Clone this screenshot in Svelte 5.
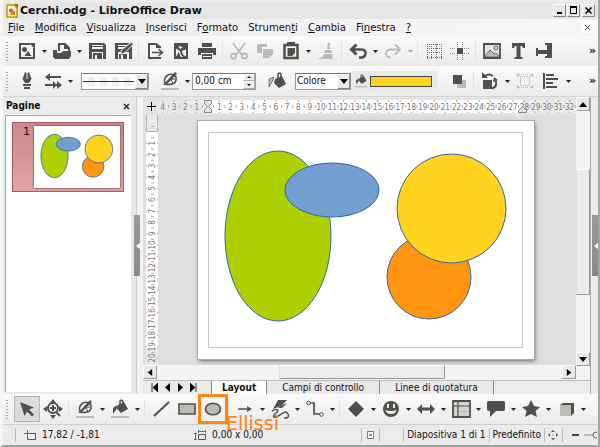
<script>
  const D = '#4d514a';
  const G = '#babdb6';

  // icon bodies, drawn on a 20x20 grid
  const icons = {
    new: `<path d="M13 3H3v14h14V7" fill="none" stroke="${D}" stroke-width="2"/><path d="M12 2l6 6V2z" fill="${D}"/><circle cx="7.500" cy="8.500" r="2.500" fill="${D}"/><path d="M11 10l3.500 5h-7z" fill="${D}"/>`,
    open: `<path d="M7 10V3h6l4 4v4" fill="none" stroke="${D}" stroke-width="2"/><path d="M12 2l6 6h-6z" fill="${D}"/><path d="M1 9h4v3h4l2-2h8v5l-2 3H3l-2-2z" fill="${D}"/>`,
    save: `<path d="M2 2h15l2 2v14H2V4z" fill="${D}"/><path d="M5 4h11v1H5zM5 6h11v2H5z" fill="#f4f4f4"/><path d="M5 11h11v7H5z" fill="#f4f4f4"/><path d="M6 12h9v6H6z" fill="${D}"/><path d="M8 14h2v4H8z" fill="#f4f4f4"/>`,
    saveas: `<path d="M2 2h17v16H2z" fill="${D}"/><path d="M5 4h11v1H5zM5 6h11v2H5z" fill="#f4f4f4"/><path d="M5 11h11v7H5z" fill="#f4f4f4"/><path d="M6 13h8v5H6z" fill="${D}"/><path d="M8 14h2v4H8z" fill="#f4f4f4"/><path d="M18.500 1l2 2-9 9-4 1 1-4z" fill="${D}" stroke="#f4f4f4"/>`,
    export: `<path d="M15 7V6l-4-3H4v14h11v-1" fill="none" stroke="${D}" stroke-width="2"/><path d="M11 2v5h5z" fill="${D}"/><path d="M7 11.500h10" stroke="${D}" stroke-width="1.500"/><path d="M13.500 8l4 3.500-4 3.500" fill="none" stroke="${D}" stroke-width="1.500"/>`,
    pdf: `<path d="M4 3h12v14H4z" fill="#f4f4f4" stroke="${D}" stroke-width="2"/><path d="M4 3h12v5l-5 2c0 3 2 5 5 6l-2 1c-3-1-5-4-5-7L4 7z" fill="${D}"/><path d="M7 5l5 1-3 2z" fill="#f4f4f4"/><path d="M4 17l4-6 2 6z" fill="${D}"/>`,
    print: `<path d="M5 2h10v4H5zM1 7h18v7h-3v-2H4v2H1z" fill="${D}"/><path d="M5 13h10v5H5z" fill="${D}"/><path d="M6 15.500h8" stroke="#f4f4f4"/>`,
    cut: `<path d="M4 2l9 12M16 2L7 14" stroke="${G}" stroke-width="2"/><circle cx="4.500" cy="15" r="2.500" fill="none" stroke="${G}" stroke-width="2"/><circle cx="15.500" cy="15" r="2.500" fill="none" stroke="${G}" stroke-width="2"/>`,
    copy: `<path d="M2 3h10v3H7v6H2z" fill="${G}"/><path d="M8 8h10v5l-4 4H8z" fill="${G}"/>`,
    paste: `<path d="M3.500 4h13v13h-13z" fill="none" stroke="${D}" stroke-width="2.500"/><path d="M6 1h8v4H6zM6.500 7h7.500v5l-3 3H6.500z" fill="${D}"/>`,
    brush: `<path d="M12 2h2v6h-3z" fill="${G}"/><path d="M9 9h6l1 3H8z" fill="${G}"/><path d="M8 13h8l1 5H2c3-1 5-3 6-5z" fill="${G}"/>`,
    undo: `<path d="M8.500 3.500L3.500 8.500l5 5" fill="none" stroke="${D}" stroke-width="3"/><path d="M5 8.500h8q5 0 4.500 4-.5 4-4.500 4h-2" fill="none" stroke="${D}" stroke-width="2.500"/>`,
    redo: `<path d="M12 3.500l5 5-5 5" fill="none" stroke="${G}" stroke-width="2"/><path d="M16 8.500H8q-5 0-5 4t5 4" fill="none" stroke="${G}" stroke-width="2"/>`,
    grid: `<g stroke="#666" stroke-dasharray="1 1"><path d="M3 3.500h15M3 7.500h15M3 11.500h15M3 16.500h15"/><path d="M3.500 3v15M7.500 3v15M12.500 3v15M17.500 3v15"/></g>`,
    guides: `<path d="M7 7h6v6H7z" fill="${D}"/><path d="M7.500 1v5M12.500 1v5M7.500 14v6M12.500 14v6M0 7.500h6M0 12.500h6M14 7.500h6M14 12.500h6" stroke="#888" stroke-dasharray="1 1"/>`,
    image: `<path d="M2 3h16v14H2z" fill="#e4e5e2" stroke="${D}" stroke-width="1.800"/><circle cx="14" cy="7" r="1.800" fill="#f4f4f4" stroke="${D}"/><path d="M3 15l5-6 4 4 2-1 4 4H3z" fill="${G}" stroke="${D}" stroke-width=".8"/>`,
    text: `<path d="M4 2h13v5h-2l-1-2h-1.500v11h2v2h-8v-2h2V5H7L6 7H4z" fill="${D}"/>`,
    fontwork: `<path d="M2 7h2v2h9V4h-2V2h7v15h-7v-2h2v-2H4v2H2z" fill="${D}"/>`,
    pen: `<path d="M8 1l-1 3-1.500 4L8 12h4l2.500-4L13 4l-1-3-1.500 1v6h-1V2z" fill="${D}"/><path d="M6 13h8v2H6zM7 16h6v2H7z" fill="${D}"/>`,
    arrows: `<path d="M5 6h13M2 14h13" stroke="${D}" stroke-width="2"/><path d="M7 2v8L2 6zM10 10v8l4-4zM14 10v8l5-4z" fill="${D}"/>`,
    linecolor: `<path d="M5 13q-2-6 3-9 5-2 8 2 1 6-4 7-4 1-7 0z" fill="none" stroke="${D}" stroke-width="1.500"/><path d="M3 14L15 1l2 2L7 13z" fill="${D}"/><path d="M10 8l5 0M11 8l2 5" stroke="${D}"/><path d="M1 17h18v2H1z" fill="${G}"/>`,
    fillcolor: `<path d="M8 6l6-3 4 7-7 4-5-5z" fill="${D}"/><path d="M10 9V2q2-2 3 1v3" fill="none" stroke="${D}" stroke-width="1.500"/><path d="M7 6L3 9v6l3-4z" fill="${D}"/><path d="M1 17h18v2H1z" fill="${G}"/>`,
    bucket: `<path d="M8 8l7-3 4 8-7 4-5-5z" fill="${D}"/><path d="M11 9V3q2-2 3 0v4" fill="none" stroke="${D}" stroke-width="1.500"/><path d="M7 6L2 8v8l3-5z" fill="${G}" stroke="${D}" stroke-width=".7"/>`,
    shadow: `<path d="M9 9h9v8H9z" fill="${G}"/><path d="M5 4h9v9H5z" fill="${D}"/>`,
    rotate: `<path d="M3 9h9v9H3z" fill="${D}"/><path d="M5 5q4-3 8 0M14 8q4 3 1 8l-3 1.500" fill="none" stroke="${D}" stroke-width="2"/><path d="M2 1v6h6z" fill="${D}"/><path d="M13 11l1-5 4 3z" fill="${D}"/>`,
    crop: `<path d="M5.500 5.500h9v9h-9z" fill="none" stroke="${G}" stroke-dasharray="2 1"/><path d="M2.500 6V3.500H5M15 3.500h2.500V6M2.500 14v2.500H5M15 16.500h2.500V14" fill="none" stroke="${G}" stroke-width="1.500"/><path d="M6 3.500h8M6 16.500h8" stroke="${G}" stroke-dasharray="1 1"/>`,
    align: `<path d="M3 2v16" stroke="${D}" stroke-width="2"/><path d="M5 3h8v2H5zM5 7h12v2H5zM5 11h7v2H5zM5 15h11v2H5z" fill="${D}"/>`,
    select: `<path d="M3 3l14 5.500-5 2 5 5-2 2-5-5-2.500 4.500z" fill="${D}"/>`,
    zoom: `<path d="M10 0l3 4H7zM10 20l3-4H7zM0 10l4-3v6zM20 10l-4-3v6z" fill="${D}"/><circle cx="10" cy="9" r="5" fill="#f4f4f4" stroke="${D}" stroke-width="2"/><path d="M10 6v6M7 9h6M13 13l4 4" stroke="${D}" stroke-width="2"/>`,
    line: `<path d="M3 17L18 3" stroke="${D}" stroke-width="2"/>`,
    rect: `<path d="M2 5h16v10H2z" fill="${G}" stroke="${D}" stroke-width="1.600"/>`,
    ellipse: `<ellipse cx="10" cy="10" rx="7.500" ry="5.800" fill="${G}" stroke="${D}" stroke-width="1.600"/>`,
    arrow: `<path d="M3 10h10" stroke="${D}" stroke-width="1.500"/><path d="M12 7l5 3-5 3z" fill="${D}"/>`,
    curve: `<path d="M8 1h9l-6 6-8 3z" fill="${D}"/><path d="M17 4l-5 5H8l4-3z" fill="${D}"/><path d="M2 12c5-3 8-1 4 2s-3 6 2 3 8-6 10-2-2 4-4 4" fill="none" stroke="${D}" stroke-width="1.500"/>`,
    connector: `<path d="M4 4h5v11h7" fill="none" stroke="${D}" stroke-width="1.700"/><circle cx="3.500" cy="4" r="1.800" fill="#f4f4f4" stroke="${D}"/><circle cx="16.500" cy="15.500" r="1.800" fill="#f4f4f4" stroke="${D}"/>`,
    diamond: `<path d="M10 2l8 8-8 8-8-8z" fill="${D}"/>`,
    smiley: `<circle cx="10" cy="10" r="8" fill="${D}"/><path d="M7 5v4M13 5v4" stroke="#e9e9e9" stroke-width="2"/><path d="M4.500 11q5.500 2 11 0-.5 4-5.500 4t-5.500-4z" fill="#e9e9e9"/>`,
    double: `<path d="M6 5v3.500h8V5l5 5-5 5v-3.500H6V15l-5-5z" fill="${D}"/>`,
    table: `<path d="M2 2h17v16H2z" fill="#d3d5d0" stroke="${D}" stroke-width="1.800"/><path d="M2 7h17M7 2v16" stroke="${D}" stroke-width="1.200"/><path d="M8 12.500h10M13 8v9" stroke="${G}"/>`,
    callout: `<path d="M3 2h14q2 0 2 2v6q0 2-2 2h-7l-6 6v-6H3q-2 0-2-2V4q0-2 2-2z" fill="${D}"/>`,
    star: `<path d="M10 1l3 6 6 1-4.500 4 1.500 6-6-3-6 3 1.500-6L1 8l6-1z" fill="${D}"/>`,
    cube: `<path d="M4 6l3-2h11v10l-3 3z" fill="${D}"/><path d="M4 6h11v11H4z" fill="${G}"/>`
  };

  // m: has a drop-down arrow, off: greyed out, '|' is a separator
  const standardBar = [
    { i: 'new', t: 'Nuovo', m: 1 }, { i: 'open', t: 'Apri', m: 1 }, { i: 'save', t: 'Salva' },
    { i: 'saveas', t: 'Salva con nome' }, '|', { i: 'export', t: 'Esporta' },
    { i: 'pdf', t: 'Esporta come PDF' }, { i: 'print', t: 'Stampa' }, '|',
    { i: 'cut', t: 'Taglia', off: 1 }, { i: 'copy', t: 'Copia', off: 1 }, { i: 'paste', t: 'Incolla', m: 1 },
    { i: 'brush', t: 'Clona formattazione', off: 1 }, '|', { i: 'undo', t: 'Annulla', m: 1 },
    { i: 'redo', t: 'Ripristina', m: 1, off: 1 }, '|', { i: 'grid', t: 'Griglia' },
    { i: 'guides', t: 'Linee guida' }, '|', { i: 'image', t: 'Immagine' }, { i: 'text', t: 'Casella di testo' },
    { i: 'fontwork', t: 'Fontwork' }
  ];
  const drawBar = [
    { i: 'select', t: 'Seleziona', on: 1 }, { i: 'zoom', t: 'Zoom' }, '|', { i: 'linecolor', t: 'Colore linea', m: 1 },
    { i: 'fillcolor', t: 'Colore riempimento', m: 1 }, '|', { i: 'line', t: 'Linea' }, { i: 'rect', t: 'Rettangolo' },
    { i: 'ellipse', t: 'Ellisse', mark: 1 }, '|', { i: 'arrow', t: 'Linee e frecce', m: 1 },
    { i: 'curve', t: 'Curva', m: 1 }, { i: 'connector', t: 'Connettore', m: 1 }, '|',
    { i: 'diamond', t: 'Forme base', m: 1 }, { i: 'smiley', t: 'Forme simbolo', m: 1 },
    { i: 'double', t: 'Frecce blocco', m: 1 }, { i: 'table', t: 'Diagramma di flusso', m: 1 },
    { i: 'callout', t: 'Legende', m: 1 }, { i: 'star', t: 'Stelle', m: 1 }, { i: 'cube', t: 'Oggetti 3D', m: 1 }
  ];
  const menus = [['', 'F', 'ile'], ['', 'M', 'odifica'], ['', 'V', 'isualizza'], ['', 'I', 'nserisci'],
    ['F', 'o', 'rmato'], ['Strumen', 't', 'i'], ['', 'C', 'ambia'], ['Fi', 'n', 'estra'], ['', '?', '']];

  // ruler pitch: one centimetre
  const cm = 11.3;
  const hTicks = Array.from({ length: 37 }, (_, i) => i - 4);
  const vTicks = Array.from({ length: 21 }, (_, i) => i);
</script>

{#snippet icon(name)}
  <svg class="icon" viewBox="0 0 20 20" aria-hidden="true">{@html icons[name]}</svg>
{/snippet}

{#snippet caret(label, off)}
  <button class="caret" class:off aria-label={label}>
    <svg viewBox="0 0 5 3" aria-hidden="true"><path d="M0 0h5L2.500 3z" fill="currentColor" /></svg>
  </button>
{/snippet}

{#snippet tools(list)}
  {#each list as b}
    {#if b === '|'}
      <span class="sep"></span>
    {:else}
      <button class="tool" class:on={b.on} class:mark={b.mark} disabled={!!b.off} aria-label={b.t}>
        {@render icon(b.i)}
        {#if b.mark}<span class="note">Ellissi</span>{/if}
      </button>
      {#if b.m}{@render caret(b.t + ': menu', b.off)}{/if}
    {/if}
  {/each}
{/snippet}

{#snippet shapes()}
  <g stroke="#3465a4">
    <ellipse cx="80" cy="115" rx="53" ry="85" fill="#aecf00" />
    <ellipse cx="134" cy="69" rx="47" ry="27" fill="#729fcf" />
    <circle cx="231" cy="156" r="42" fill="#ff950e" />
    <circle cx="253.500" cy="87.500" r="54.500" fill="#ffd320" />
  </g>
{/snippet}

<div class="window">
  <header class="title">
    <svg class="logo" viewBox="0 0 12 14" aria-hidden="true">
      <path d="M1 1h7l3 3v9H1z" fill="#fff7e0" stroke="#c99500" stroke-width="1.500" />
      <path d="M8 0l4 4V0z" fill="#8a6500" />
      <circle cx="5" cy="6.500" r="2" fill="#e0502a" />
      <path d="M6 7h3v4H4z" fill="#d98b00" />
    </svg>
    <h1>Cerchi.odg - LibreOffice Draw</h1>
    <button class="win" aria-label="Riduci a icona"><svg viewBox="0 0 9 9"><path d="M2 7h5" stroke="#000" stroke-width="2" /></svg></button>
    <button class="win" aria-label="Ingrandisci"><svg viewBox="0 0 9 9"><path d="M1.500 1.500h6v6h-6z" fill="none" stroke="#000" /><path d="M1 1h7" stroke="#000" stroke-width="2" /></svg></button>
    <button class="win close" aria-label="Chiudi"><svg viewBox="0 0 9 9"><path d="M1.500 1.500l6 6M7.500 1.500l-6 6" stroke="#000" stroke-width="1.500" /></svg></button>
  </header>

  <nav class="menubar">
    {#each menus as [a, k, z]}
      <button>{a}<u>{k}</u>{z}</button>
    {/each}
    <button class="docclose" aria-label="Chiudi documento">
      <svg viewBox="0 0 7 7"><path d="M1 1l5 5M6 1L1 6" stroke="#444" /></svg>
    </button>
  </nav>

  <div class="bar">
    <span class="grip"></span>
    {@render tools(standardBar)}
    <button class="more" aria-label="Altro">»</button>
  </div>

  <div class="bar">
    <span class="grip"></span>
    <button class="tool" aria-label="Linea">{@render icon('pen')}</button>
    <button class="tool" aria-label="Estremità linea">{@render icon('arrows')}</button>
    {@render caret('Estremità linea: menu')}
    <button class="field linestyle" aria-label="Stile linea">
      <span class="stroke"></span>
      <span class="drop"><svg viewBox="0 0 8 5"><path d="M0 0h8L4 5z" /></svg></span>
    </button>
    <span class="gap"></span>
    <button class="tool" aria-label="Colore linea">{@render icon('linecolor')}</button>
    {@render caret('Colore linea: menu')}
    <div class="field width">
      <input value="0,00 cm" aria-label="Spessore linea" />
      <span class="spin">
        <button aria-label="Aumenta"><svg viewBox="0 0 4 2"><path d="M0 2h4L2 0z" /></svg></button>
        <button aria-label="Riduci"><svg viewBox="0 0 4 2"><path d="M0 0h4L2 2z" /></svg></button>
      </span>
    </div>
    <span class="gap"></span>
    <button class="tool" aria-label="Area">{@render icon('bucket')}</button>
    <div class="field fill">
      <select aria-label="Tipo di riempimento"><option>Colore</option></select>
      <span class="drop"><svg viewBox="0 0 8 5"><path d="M0 0h8L4 5z" /></svg></span>
    </div>
    <button class="swatch" aria-label="Colore di riempimento">
      {@render icon('fillcolor')}
      <span></span>
    </button>
    <span class="gap"></span>
    <button class="tool" aria-label="Ombra">{@render icon('shadow')}</button>
    <span class="sep"></span>
    <button class="tool" aria-label="Ruota">{@render icon('rotate')}</button>
    {@render caret('Ruota: menu')}
    <button class="tool" disabled aria-label="Ritaglia">{@render icon('crop')}</button>
    <button class="tool" aria-label="Allinea">{@render icon('align')}</button>
    {@render caret('Allinea: menu')}
    <button class="more" aria-label="Altro">»</button>
  </div>

  <main>
    <aside class="pages">
      <div class="head">
        <h2>Pagine</h2>
        <button aria-label="Chiudi riquadro">
          <svg viewBox="0 0 7 7"><path d="M1 1l5 5M6 1L1 6" stroke="#333" stroke-width="1.700" /></svg>
        </button>
      </div>
      <div class="list">
        <button class="thumb" aria-label="Pagina 1">
          <span>1</span>
          <svg viewBox="0 0 336 238">
            <g stroke-width="3">{@render shapes()}</g>
          </svg>
        </button>
      </div>
    </aside>
    <div class="splitter"><button aria-label="Nascondi riquadro"></button></div>

    <div class="editor">
      <div class="row">
        <div class="hruler">
          <svg class="cross" viewBox="0 0 9 9"><path d="M4.500 0v9M0 4.500h9" stroke="#000" /></svg>
          <svg class="scale" height="13" aria-hidden="true">
            <rect x="49" width="314" height="13" fill="#fff" />
            {#each hTicks as n}
              {#if n !== 0}
                <text x={49 + n * cm} y="10">{Math.abs(n)}</text>
              {/if}
              <path d="M{49 + (n + 0.5) * cm} 5v3M{49 + n * cm} 0v2M{49 + n * cm} 12v1" stroke="#aaa" />
            {/each}
            <path d="M45.500 .5h7v3l-3 3 3 3v3h-7v-3l3-3-3-3zM359.500 12.500v-2l4-4 4 4v2z" fill="#e4e4e4" stroke="#888" />
          </svg>
        </div>
        <div class="work">
          <svg class="vscale" width="12" aria-hidden="true">
            <rect y="17" width="12" height="216" fill="#fff" />
            {#each vTicks as n}
              {#if n !== 0}
                <text transform="translate(9 {17 + n * cm}) rotate(-90)">{n}</text>
              {/if}
              <path d="M5 {17 + (n - 0.5) * cm}h3M0 {17 + n * cm}h1M11 {17 + n * cm}h1" stroke="#aaa" />
            {/each}
            <path d="M.5 0v16.500h11V0" fill="none" stroke="#bbb" />
          </svg>
          <div class="canvas">
            <svg class="paper" viewBox="0 0 336 238" width="336" height="238">
              <path d="M10.500 11.500h314v215h-314z" fill="none" stroke="#c4c4c4" />
              {@render shapes()}
            </svg>
          </div>
        </div>
        <div class="hscroll">
          <button class="step" aria-label="Scorri a sinistra"><svg viewBox="0 0 5 8"><path d="M5 0v8L0 4z" /></svg></button>
          <span class="track"><span class="thumbbar"></span></span>
          <button class="step" aria-label="Scorri a destra"><svg viewBox="0 0 5 8"><path d="M0 0v8l5-4z" /></svg></button>
        </div>
      </div>
      <div class="vscroll">
        <button class="step" aria-label="Scorri in alto"><svg viewBox="0 0 8 5"><path d="M0 5h8L4 0z" /></svg></button>
        <span class="track"><span class="thumbbar"></span></span>
        <button class="step" aria-label="Scorri in basso"><svg viewBox="0 0 8 5"><path d="M0 0h8L4 5z" /></svg></button>
      </div>
      <div class="tabs">
        <button class="nav" aria-label="Primo"><svg viewBox="0 0 7 9"><path d="M1 0v9M7 0v9L2 4.500z" stroke="#000" stroke-width=".8" /></svg></button>
        <button class="nav" aria-label="Precedente"><svg viewBox="0 0 7 9"><path d="M6 0v9L1 4.500z" /></svg></button>
        <button class="nav" aria-label="Successivo"><svg viewBox="0 0 7 9"><path d="M1 0v9l5-4.500z" /></svg></button>
        <button class="nav" aria-label="Ultimo"><svg viewBox="0 0 7 9"><path d="M6 0v9M0 0v9l5-4.500z" stroke="#000" stroke-width=".8" /></svg></button>
        <button class="tab active">Layout</button>
        <button class="tab">Campi di controllo</button>
        <button class="tab">Linee di quotatura</button>
      </div>
    </div>
    <div class="splitter right"><button aria-label="Mostra barra laterale"></button></div>
  </main>

  <div class="bar draw">
    <span class="grip"></span>
    {@render tools(drawBar)}
  </div>

  <footer>
    <span class="cell pos">
      <svg viewBox="0 0 12 10"><path d="M3.500 3.500h8v6h-8z" fill="none" stroke="#555" /><path d="M0 3.500h6M3.500 0v6" stroke="#2a7fd4" /></svg>
      17,82 / -1,81
    </span>
    <span class="cell size">
      <svg viewBox="0 0 12 10"><path d="M4.500 4.500h7v5h-7z" fill="none" stroke="#555" /><path d="M1.500 3v7M0 3.500h3M0 9.500h3M4 1.500h8M4.500 0v3M11.500 0v3" stroke="#2a7fd4" /></svg>
      0,00 x 0,00
    </span>
    <span class="cell mod">
      <svg viewBox="0 0 8 9"><path d="M.5 .5h7v8h-7z" fill="#fff" stroke="#666" /><path d="M2.500 3l3 3M5.500 3l-3 3" stroke="#333" /></svg>
    </span>
    <span class="cell sign"></span>
    <span class="cell">Diapositiva 1 di 1</span>
    <span class="cell">Predefinito</span>
    <span class="cell fit">
      <svg viewBox="0 0 10 10"><path d="M5 0l2 2H3zM5 10l2-2H3zM0 5l2-2v4zM10 5L8 3v4zM4.500 4.500h1v1h-1z" fill="#555" /></svg>
    </span>
    <span class="cell zoomer">
      <svg viewBox="0 0 26 10"><path d="M1 5h7" stroke="#444" stroke-width="2" /><path d="M13 5h10" stroke="#888" /><circle cx="25" cy="5" r="3" fill="#eee" stroke="#666" /></svg>
    </span>
  </footer>
</div>

<style>
  :global(body) {
    margin: 0;
  }
  .window {
    box-sizing: border-box;
    display: flex;
    flex-direction: column;
    min-height: 100vh;
    overflow: hidden;
    padding-top: 2px;
    border: solid;
    border-width: 0 2px 2px 3px;
    border-color: #fff #a5a5a5 #a5a5a5 #f6f6f6;
    background: #ebebeb;
    color: #111;
    font: 10px/12px 'DejaVu Sans Condensed', 'DejaVu Sans', sans-serif;
  }
  button,
  input,
  select {
    margin: 0;
    padding: 0;
    border: 0;
    background: none;
    color: inherit;
    font: inherit;
  }
  svg {
    display: block;
  }
  h1,
  h2 {
    margin: 0;
    font-size: 10px;
  }

  .title {
    display: flex;
    align-items: center;
    height: 17px;
    padding: 0 3px;
    background: #e6e6e6;
  }
  .logo {
    width: 12px;
    height: 14px;
    margin-right: 2px;
  }
  .title h1 {
    flex: 1;
    font: bold 11px/15px 'DejaVu Sans', sans-serif;
  }
  .win {
    display: grid;
    place-items: center;
    box-sizing: border-box;
    width: 13px;
    height: 13px;
    margin-left: 1px;
    border: 1px solid;
    border-color: #fff #888 #888 #fff;
  }
  .win svg {
    width: 9px;
    height: 9px;
  }
  .close {
    margin-left: 2px;
  }

  .menubar {
    display: flex;
    align-items: center;
    gap: 10px;
    height: 17px;
    padding: 0 5px;
    background: linear-gradient(90deg, #ebebeb, #f7f7f7);
    font-family: 'DejaVu Sans', sans-serif;
  }
  .docclose {
    margin-left: auto;
    padding: 2px;
    background: #fff;
  }
  .docclose svg,
  .head svg {
    width: 7px;
    height: 7px;
  }

  .bar {
    display: flex;
    align-items: center;
    box-sizing: border-box;
    height: 30px;
    background: linear-gradient(#fafafa, #ebebeb);
  }
  .grip {
    width: 2px;
    height: 19px;
    margin: 0 6px 0 3px;
    background: repeating-linear-gradient(#aaa 0 1px, transparent 1px 3px);
  }
  .tool {
    position: relative;
    display: grid;
    flex: none;
    place-items: center;
    box-sizing: border-box;
    width: 26px;
    height: 26px;
  }
  .icon {
    width: 20px;
    height: 20px;
  }
  .on {
    border: 1px solid #b5b5b5;
    background: #dcdcdc;
  }
  .mark {
    outline: 3px solid #ff8412;
    outline-offset: -1px;
  }
  .note {
    position: absolute;
    left: 26px;
    top: 17px;
    z-index: 2;
    color: #ff8412;
    font: 19px/20px 'DejaVu Sans', sans-serif;
  }
  .caret {
    flex: none;
    width: 9px;
    height: 20px;
    color: #222;
  }
  .caret svg {
    width: 5px;
    height: 3px;
    margin: 0 2px;
  }
  .off {
    color: #aaa;
  }
  .sep {
    width: 1px;
    height: 20px;
    margin: 0 3px 0 2px;
    background: #e2e2e2;
  }
  .gap {
    width: 8px;
  }
  .more {
    margin-left: auto;
    padding-right: 2px;
    font: bold 11px/14px 'DejaVu Sans', sans-serif;
  }

  .field {
    display: flex;
    box-sizing: border-box;
    height: 17px;
    border: 1px solid #999;
    border-top-color: #777;
    background: #fff;
  }
  .drop {
    display: grid;
    place-items: center;
    box-sizing: border-box;
    width: 13px;
    border: 1px solid;
    border-color: #fff #888 #888 #fff;
    background: #e8e8e8;
    pointer-events: none;
  }
  .drop svg {
    width: 8px;
    height: 5px;
  }
  .linestyle {
    align-items: stretch;
    width: 68px;
    margin-left: 6px;
  }
  .stroke {
    flex: 1;
    margin: 3px 1px;
    background:
      linear-gradient(#333, #333) center / 100% 1px no-repeat,
      repeating-linear-gradient(90deg, #fff 0 5px, #eee 5px 12px);
  }
  .width {
    width: 64px;
  }
  .width input {
    flex: 1;
    min-width: 0;
    padding-left: 2px;
  }
  .spin {
    display: flex;
    flex-direction: column;
    width: 12px;
    background: #ececec;
  }
  .spin button {
    flex: 1;
    padding: 0 3px;
    border: 1px solid;
    border-color: #fff #aaa #aaa #fff;
    box-sizing: border-box;
  }
  .spin svg {
    width: 4px;
    height: 2px;
  }
  .fill {
    width: 56px;
    margin-left: 5px;
  }
  .fill select {
    flex: 1;
    min-width: 0;
    padding-left: 1px;
    appearance: none;
  }
  .swatch {
    display: flex;
    align-items: center;
    gap: 2px;
    width: 86px;
    height: 20px;
    padding-left: 3px;
    background: #e9e9e9;
  }
  .swatch .icon {
    width: 14px;
    height: 14px;
  }
  .swatch span {
    width: 60px;
    height: 9px;
    border: 1px solid #444;
    background: #ffd320;
  }

  main {
    display: flex;
    flex: 1;
    min-height: 0;
    border-top: 1px solid #d4d4d4;
  }
  .pages {
    display: flex;
    flex-direction: column;
    box-sizing: border-box;
    width: 128px;
    padding: 0 0 2px 2px;
  }
  .head {
    display: flex;
    align-items: center;
    justify-content: space-between;
    height: 18px;
    padding: 0 1px;
  }
  .list {
    flex: 1;
    border: solid #aaa;
    border-width: 1px 0 0 1px;
    background: #fff;
  }
  .thumb {
    display: flex;
    gap: 4px;
    box-sizing: border-box;
    width: 112px;
    height: 70px;
    margin: 6px;
    padding: 3px 3px 3px 10px;
    border: 1px solid #a85c60;
    background: linear-gradient(#cc888a, #e3a3a4);
    font: 11px/12px 'DejaVu Sans', sans-serif;
  }
  .thumb svg {
    flex: 1;
    height: 62px;
    background: #fff;
    box-shadow: 0 0 2px #333;
  }
  .splitter {
    display: flex;
    align-items: center;
    justify-content: center;
    width: 12px;
    background: linear-gradient(90deg, #e8e8e8 5px, #ccc 5px 6px, #f2f2f2 6px);
  }
  .splitter button {
    width: 6px;
    height: 61px;
    background: linear-gradient(#999, #8a8a8a);
  }
  .splitter button::before {
    content: '';
    display: block;
    margin-left: 1px;
    border: solid transparent;
    border-width: 3px 4px 3px 0;
    border-right-color: #fff;
  }
  .right {
    width: 8px;
    border-left: 1px solid #aaa;
    box-sizing: border-box;
    background: #ececec;
  }

  .editor {
    display: grid;
    flex: 1;
    grid-template-columns: 1fr 14px;
    grid-template-rows: 1fr 14px;
    min-width: 0;
  }
  .row {
    display: flex;
    flex-direction: column;
    min-width: 0;
  }
  .hruler {
    display: flex;
    align-items: center;
    height: 18px;
    padding-left: 4px;
    background: #e4e4e4;
  }
  .cross {
    width: 9px;
    height: 9px;
    margin-right: 3px;
  }
  .scale {
    flex: 1;
    min-width: 0;
    background: #e9e9e9;
  }
  .scale text,
  .vscale text {
    fill: #777;
    font: 8px 'DejaVu Sans Condensed', 'DejaVu Sans', sans-serif;
    text-anchor: middle;
  }
  .work {
    display: flex;
    flex: 1;
    min-height: 250px;
    padding-left: 3px;
    background: #dededd;
  }
  .vscale {
    height: 250px;
    background: #e9e9e9;
  }
  .canvas {
    flex: 1;
    padding: 6px 0 0 40px;
  }
  .paper {
    background: #fff;
    outline: 1px solid #aaa;
    box-shadow: 1px 2px 4px #666;
  }
  .hscroll {
    display: flex;
    height: 15px;
    background: #f4f4f4;
  }
  .step {
    display: grid;
    flex: none;
    place-items: center;
    box-sizing: border-box;
    width: 14px;
    height: 14px;
    border: 1px solid;
    border-color: #fff #999 #999 #fff;
    background: #e8e8e8;
  }
  .step svg {
    width: 8px;
    height: 7px;
  }
  .track {
    flex: 1;
  }
  .thumbbar {
    display: block;
    box-sizing: border-box;
    border: 1px solid;
    border-color: #fff #999 #999 #ddd;
    background: #ebebeb;
  }
  .hscroll .thumbbar {
    width: 41%;
    height: 14px;
    margin-left: 30%;
  }
  .vscroll {
    display: flex;
    flex-direction: column;
    background: #f4f4f4;
  }
  .vscroll .track {
    padding-top: 58px;
  }
  .vscroll .thumbbar {
    height: 126px;
  }
  .vscroll .step:last-child {
    margin-bottom: 14px;
  }
  .tabs {
    display: flex;
    grid-column: 1 / -1;
    border-top: 1px solid #bbb;
    padding-left: 5px;
  }
  .nav {
    width: 13px;
    padding: 0 3px;
  }
  .nav svg {
    width: 7px;
    height: 9px;
  }
  .tab {
    padding: 0 15px;
    border-right: 1px solid #888;
    background: #e9e9e9;
  }
  .nav + .tab {
    margin-left: 11px;
    border-left: 1px solid #888;
  }
  .active {
    padding: 0 10px;
    background: #fff;
    font-weight: bold;
  }

  footer {
    display: flex;
    align-items: center;
    height: 20px;
    border-top: 1px solid #cfcfcf;
    padding-left: 12px;
  }
  .cell {
    display: flex;
    flex: none;
    align-items: center;
    gap: 6px;
    box-sizing: border-box;
    height: 14px;
    padding: 0 3px;
    border-left: 1px solid #bbb;
    white-space: nowrap;
  }
  .cell svg {
    height: 10px;
  }
  .pos {
    flex: 170;
    padding-left: 8px;
  }
  .size {
    flex: 170;
    border-left: 0;
  }
  .mod {
    width: 18px;
    padding: 0 5px;
  }
  .sign {
    width: 24px;
  }
  .fit {
    width: 18px;
  }
  .zoomer {
    width: 36px;
    padding: 0 0 0 8px;
  }
</style>
